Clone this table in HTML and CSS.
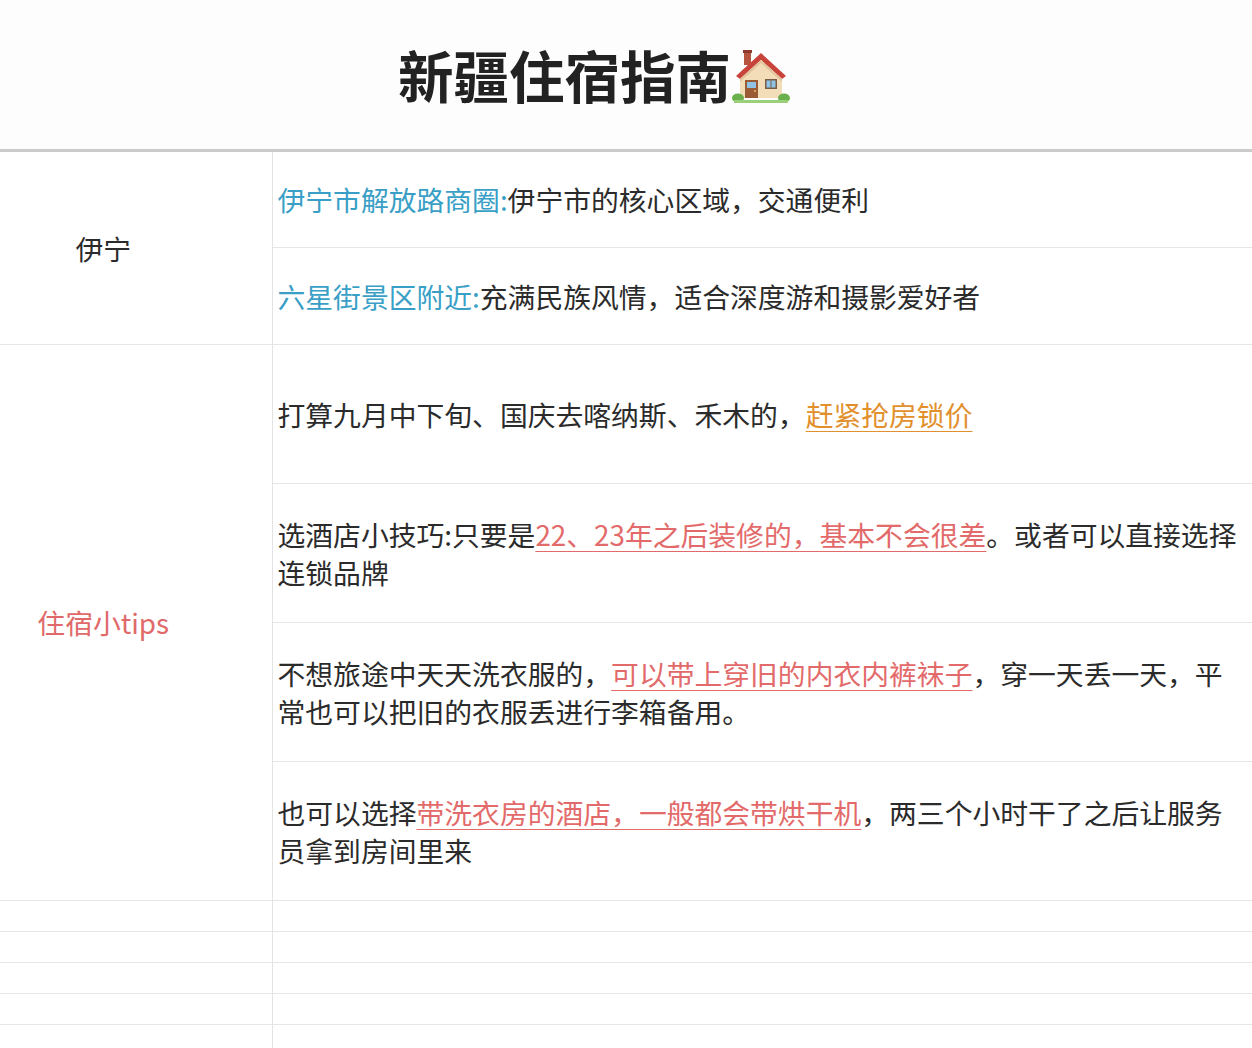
FILE: index.html
```html
<!DOCTYPE html>
<html lang="zh-CN">
<head>
<meta charset="utf-8">
<title>新疆住宿指南</title>
<link rel="stylesheet" href="styles.css">
</head>
<body>
<header class="title-bar">
  <h1 class="title">新疆住宿指南<svg class="house" viewBox="0 0 58 56" width="58" height="56" aria-hidden="true">
    <rect x="12" y="3" width="7" height="14" fill="#b5543f"/>
    <rect x="11" y="2" width="9" height="3" fill="#8e3a2c"/>
    <polygon points="29,5 4,28 8,31 29,12 50,31 54,28" fill="#c8443a"/>
    <polygon points="29,12 8,31 8,50 50,50 50,31" fill="#f3dcb8"/>
    <polygon points="29,12 8,31 8,34 29,15 50,34 50,31" fill="#e2c49c"/>
    <rect x="13" y="32" width="13" height="18" fill="#9a5a33"/>
    <rect x="15" y="34" width="9" height="6" fill="#8fc3e6"/>
    <circle cx="23" cy="43" r="1" fill="#e8c060"/>
    <rect x="33" y="31" width="12" height="10" fill="#7a5b46"/>
    <rect x="34.5" y="32.5" width="9" height="7" fill="#8fc3e6"/>
    <rect x="38.5" y="32.5" width="1" height="7" fill="#7a5b46"/>
    <ellipse cx="6" cy="50" rx="6" ry="4.5" fill="#6ab04c"/>
    <ellipse cx="52" cy="50" rx="6" ry="4.5" fill="#6ab04c"/>
    <rect x="2" y="52" width="54" height="3" fill="#9ccf7a"/>
  </svg></h1>
</header>
<table class="grid">
  <colgroup><col class="col-left"><col class="col-right"></colgroup>
  <tbody>
    <tr class="r1">
      <td class="left" rowspan="2">伊宁</td>
      <td class="right"><span class="blue">伊宁市解放路商圈:</span>伊宁市的核心区域，交通便利</td>
    </tr>
    <tr class="r2">
      <td class="right"><span class="blue">六星街景区附近:</span>充满民族风情，适合深度游和摄影爱好者</td>
    </tr>
    <tr class="tall">
      <td class="left red" rowspan="4">住宿小tips</td>
      <td class="right">打算九月中下旬、国庆去喀纳斯、禾木的，<span class="orange">赶紧抢房锁价</span></td>
    </tr>
    <tr class="tall">
      <td class="right">选酒店小技巧:只要是<span class="pink">22、23年之后装修的，基本不会很差</span>。或者可以直接选择连锁品牌</td>
    </tr>
    <tr class="tall">
      <td class="right">不想旅途中天天洗衣服的，<span class="pink">可以带上穿旧的内衣内裤袜子</span>，穿一天丢一天，平常也可以把旧的衣服丢进行李箱备用。</td>
    </tr>
    <tr class="tall">
      <td class="right">也可以选择<span class="pink">带洗衣房的酒店，一般都会带烘干机</span>，两三个小时干了之后让服务员拿到房间里来</td>
    </tr>
    <tr class="empty"><td class="left"></td><td class="right"></td></tr>
    <tr class="empty"><td class="left"></td><td class="right"></td></tr>
    <tr class="empty"><td class="left"></td><td class="right"></td></tr>
    <tr class="empty"><td class="left"></td><td class="right"></td></tr>
    <tr class="empty"><td class="left"></td><td class="right"></td></tr>
  </tbody>
</table>
</body>
</html>
```

FILE: styles.css
```css
html, body {
  margin: 0;
  padding: 0;
  background: #ffffff;
}
body {
  font-family: "Noto Sans CJK SC", "Noto Sans", sans-serif;
  color: #2b2b2b;
  width: 1252px;
  overflow: hidden;
}
.title-bar {
  height: 149px;
  border-bottom: 3px solid #cbcbcb;
  display: flex;
  justify-content: center;
  align-items: center;
  padding-right: 64px;
  background: #fdfdfd;
}
.title {
  margin: 0;
  font-size: 55.5px;
  font-weight: 700;
  color: #222222;
  line-height: 1;
  display: flex;
  align-items: center;
  letter-spacing: 0;
}
.house {
  margin-left: 1px;
  margin-top: 2px;
}
.grid {
  border-collapse: collapse;
  width: 1252px;
  table-layout: fixed;
}
.col-left { width: 272px; }
.grid td {
  padding: 0;
  border-bottom: 1px solid #e6e6e6;
  font-size: 27.8px;
  line-height: 38px;
  vertical-align: middle;
}
.grid td.left {
  border-right: 1px solid #e3e3e3;
  text-align: center;
  padding-right: 65px;
  color: #2b2b2b;
}
.grid td.left.red { color: #e06a6a; }
.grid td.right {
  padding-left: 5px;
  padding-right: 8px;
}
.r1 { height: 95px; }
.r2 { height: 97px; }
.tall { height: 139px; }
.tall:first-of-type { height: 138px; }
.empty { height: 31px; }
.blue { color: #3a9fc6; }
.orange {
  color: #e2902e;
  text-decoration: underline;
  text-decoration-thickness: 1px;
  text-underline-offset: 5px;
}
.pink {
  color: #e36a6a;
  text-decoration: underline;
  text-decoration-thickness: 1px;
  text-underline-offset: 5px;
}
```
